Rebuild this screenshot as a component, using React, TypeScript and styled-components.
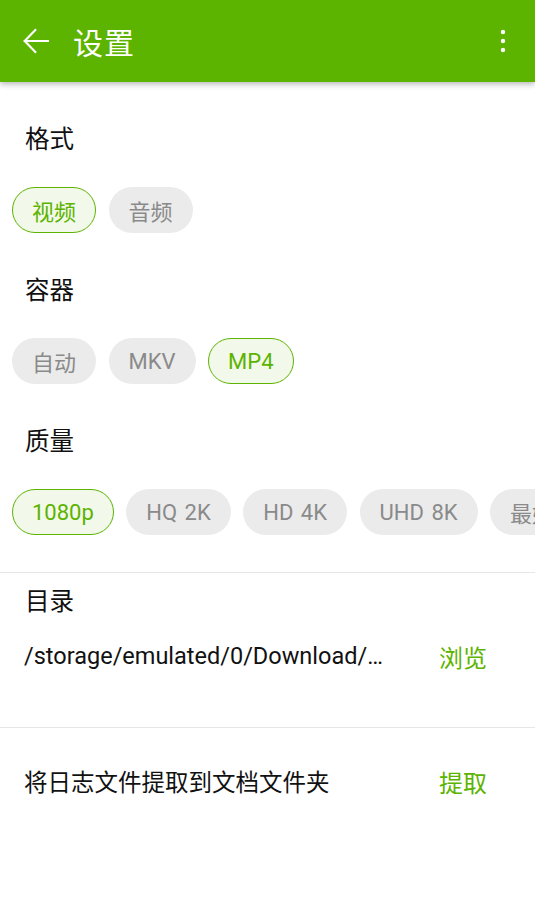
import React, { FunctionComponent } from 'react';
import styled, { createGlobalStyle } from 'styled-components';

const GREEN = '#5cb300';

const PageBody = createGlobalStyle`
  body {
    margin: 0;
    background: white;
    font-family: Roboto, "Noto Sans CJK SC", sans-serif;
  }
`;

const Screen = styled.div`
    width: 535px;
    height: 915px;
    overflow: hidden;
    background: white;
    display: flex;
    flex-direction: column;
`;

const AppBar = styled.header`
    height: 82px;
    flex-shrink: 0;
    background-color: ${GREEN};
    display: flex;
    align-items: center;
    padding: 0 14px 0 18px;
    box-shadow: 0 2px 6px rgba(0, 0, 0, 0.3);
    position: relative;
    z-index: 1;
`;

const IconButton = styled.button`
    background: none;
    border: none;
    padding: 0;
    width: 36px;
    height: 36px;
    display: flex;
    align-items: center;
    justify-content: center;
    color: white;
`;

const BarTitle = styled.h1`
    margin: 0 0 0 19px;
    flex: 1;
    color: white;
    font-size: 30px;
    font-weight: 400;
    letter-spacing: 1px;
`;

const Content = styled.main`
    display: flex;
    flex-direction: column;
`;

const Section = styled.section`
    padding-top: 42px;
`;

const SectionTitle = styled.h2`
    margin: 0 0 0 25px;
    font-size: 24.5px;
    line-height: 32px;
    font-weight: 400;
    color: #111;
`;

const DirTitle = styled(SectionTitle)`
    margin-top: 13px;
`;

const ChipRow = styled.div`
    display: flex;
    gap: 12.5px;
    padding: 0 12px;
    margin-top: 31px;
    overflow: hidden;
`;

const Chip = styled.span<{ $active?: boolean }>`
    flex-shrink: 0;
    height: 46px;
    box-sizing: border-box;
    padding: 0 19px;
    display: flex;
    align-items: center;
    border-radius: 23px;
    font-size: 22px;
    word-spacing: 2px;
    white-space: nowrap;
    border: 1.5px solid ${(p) => (p.$active ? GREEN : 'transparent')};
    background: ${(p) => (p.$active ? '#f2f9ea' : '#ebebeb')};
    color: ${(p) => (p.$active ? GREEN : '#8a8a8a')};
`;

const Divider = styled.hr<{ $top: number }>`
    margin: ${(p) => p.$top}px 0 0;
    border: none;
    border-top: 1.5px solid #e6e6e6;
`;

const Row = styled.div<{ $top: number }>`
    display: flex;
    align-items: center;
    height: 32px;
    margin-top: ${(p) => p.$top}px;
    padding: 0 48px 0 24px;
    font-size: 23.5px;
    color: #111;
`;

const RowText = styled.span`
    flex: 1;
    white-space: nowrap;
`;

const Action = styled.span`
    color: ${GREEN};
    font-size: 24px;
`;

const BackIcon = () => (
    <svg width="32" height="32" viewBox="0 0 24 24" fill="none" stroke="white" strokeWidth="1.6" strokeLinecap="square">
        <path d="M21 12H3.5M11.5 3.8L3.5 12l8 8.2" />
    </svg>
);

const MoreIcon = () => (
    <svg width="8" height="24" viewBox="0 0 8 24" fill="white">
        <circle cx="4" cy="3" r="2.2" />
        <circle cx="4" cy="12" r="2.2" />
        <circle cx="4" cy="21" r="2.2" />
    </svg>
);

type Option = { label: string; active?: boolean };

const formats: Option[] = [{ label: '视频', active: true }, { label: '音频' }];
const containers: Option[] = [{ label: '自动' }, { label: 'MKV' }, { label: 'MP4', active: true }];
const qualities: Option[] = [
    { label: '1080p', active: true },
    { label: 'HQ 2K' },
    { label: 'HD 4K' },
    { label: 'UHD 8K' },
    { label: '最好' },
];

const Chips: FunctionComponent<{ options: Option[] }> = ({ options }) => (
    <ChipRow>
        {options.map((o) => (
            <Chip key={o.label} $active={o.active}>
                {o.label}
            </Chip>
        ))}
    </ChipRow>
);

const App: FunctionComponent = () => {
    return (
        <>
            <PageBody />
            <Screen>
                <AppBar>
                    <IconButton>
                        <BackIcon />
                    </IconButton>
                    <BarTitle>设置</BarTitle>
                    <IconButton>
                        <MoreIcon />
                    </IconButton>
                </AppBar>
                <Content>
                    <Section>
                        <SectionTitle>格式</SectionTitle>
                        <Chips options={formats} />
                    </Section>
                    <Section>
                        <SectionTitle>容器</SectionTitle>
                        <Chips options={containers} />
                    </Section>
                    <Section>
                        <SectionTitle>质量</SectionTitle>
                        <Chips options={qualities} />
                    </Section>
                    <Divider $top={37} />
                    <DirTitle>目录</DirTitle>
                    <Row $top={22}>
                        <RowText>/storage/emulated/0/Download/…</RowText>
                        <Action>浏览</Action>
                    </Row>
                    <Divider $top={55} />
                    <Row $top={37}>
                        <RowText>将日志文件提取到文档文件夹</RowText>
                        <Action>提取</Action>
                    </Row>
                </Content>
            </Screen>
        </>
    );
};

export default App;
